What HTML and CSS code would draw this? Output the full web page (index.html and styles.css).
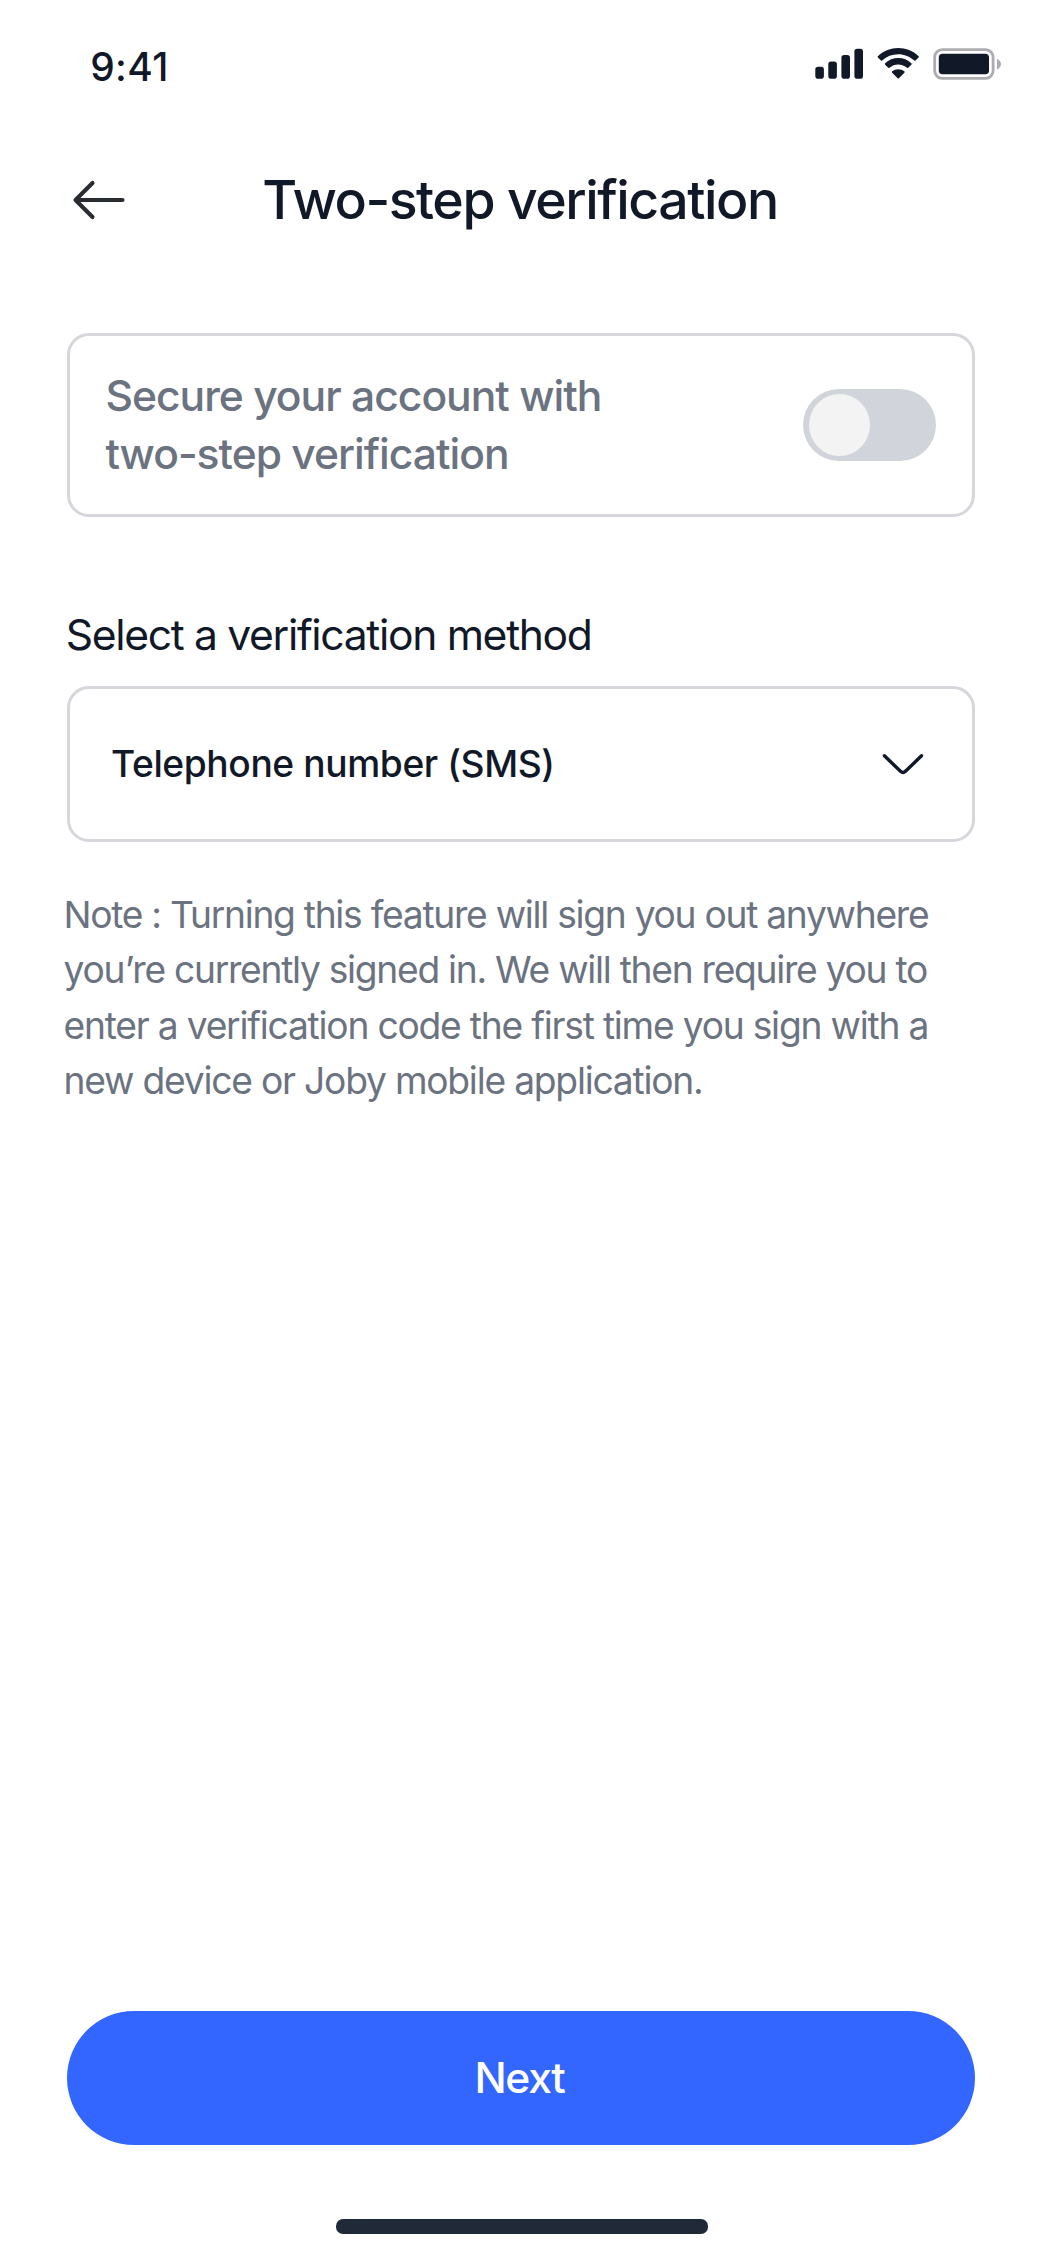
FILE: index.html
```
<!DOCTYPE html>
<html lang="en">
<head>
<meta charset="utf-8">
<title>Two-step verification</title>
<link rel="stylesheet" href="styles.css">
</head>
<body>
<div class="screen">
  <div class="status">
    <span class="time">9:41</span>
    <div class="indicators">
      <svg class="signal" width="48" height="32" viewBox="0 0 48 32" fill="#111827">
        <rect x="0.3" y="18.7" width="8.6" height="12" rx="2.8"/>
        <rect x="13.3" y="13.5" width="8.6" height="17.2" rx="2.8"/>
        <rect x="26.4" y="7" width="8.6" height="23.7" rx="2.8"/>
        <rect x="39.4" y="0.7" width="8.6" height="30" rx="2.8"/>
      </svg>
      <svg class="wifi" width="42.5" height="31" viewBox="0 0 17 12.4" fill="#111827">
        <path d="M8.5 2.46c2.4 0 4.7.93 6.43 2.58.13.13.34.13.46 0l1.25-1.27a.35.35 0 000-.5C12.1-1.09 4.9-1.09.34 3.27a.35.35 0 000 .5l1.25 1.27c.13.13.34.13.47 0A9.3 9.3 0 018.5 2.46z"/>
        <path d="M8.5 6.56c1.3 0 2.57.49 3.53 1.37.13.12.34.12.47-.01l1.25-1.27a.36.36 0 000-.51 7.63 7.63 0 00-10.5 0 .36.36 0 000 .51l1.25 1.27c.13.13.34.13.47.01a5.24 5.24 0 013.53-1.37z"/>
        <path d="M10.95 9.34a.35.35 0 01-.01.51l-2.2 2.2a.35.35 0 01-.48 0l-2.2-2.2a.35.35 0 01-.01-.51 3.82 3.82 0 014.9 0z"/>
      </svg>
      <svg class="battery" width="69" height="32" viewBox="0 0 69 32">
        <rect x="1.7" y="1.6" width="58.4" height="28.8" rx="7.6" fill="none" stroke="#adadb1" stroke-width="2.8"/>
        <rect x="5.8" y="5.7" width="50.2" height="20.6" rx="3.8" fill="#111827"/>
        <path d="M64 10.7v10.8c2.4-1 4-3 4-5.4s-1.6-4.4-4-5.4z" fill="#adadb1"/>
      </svg>
    </div>
  </div>

  <header class="header">
    <svg class="back" width="56" height="44" viewBox="0 0 56 44" fill="none" stroke="#292d32" stroke-width="4.1" stroke-linecap="round" stroke-linejoin="round">
      <path d="M21.500 5L4.500 22l17 17M51.500 22H5"/>
    </svg>
    <h1 class="title">Two-step verification</h1>
  </header>

  <main class="main">
    <section class="card">
      <p class="card-text">Secure your account with<br>two-step verification</p>
      <span class="toggle"><span class="knob"></span></span>
    </section>

    <p class="label">Select a verification method</p>
    <div class="select">
      <span class="select-value">Telephone number (SMS)</span>
      <svg class="chevron" width="44" height="26" viewBox="0 0 44 26" fill="none" stroke="#111827" stroke-width="3.4" stroke-linecap="round" stroke-linejoin="round">
        <path d="M3.4 4.8L19.5 20.3Q22 22.700 24.500 20.300L40.500 4.800"/>
      </svg>
    </div>

    <p class="note">Note : Turning this feature will sign you out anywhere<br>you’re currently signed in. We will then require you to<br><span class="note-end">enter a verification code the first time you sign with a<br>new device or Joby mobile application.</span></p>
  </main>

  <footer class="footer">
    <button class="next" type="button">Next</button>
    <div class="home-bar"></div>
  </footer>
</div>
</body>
</html>
```
FILE: styles.css
```
* { box-sizing: border-box; }

body {
  margin: 0;
  background: #fff;
  color: #111827;
  font-family: Inter, "Liberation Sans", sans-serif;
}

h1, p { margin: 0; }
svg { display: block; flex: none; }

.screen {
  display: flex;
  flex-direction: column;
  width: 1042px;
  height: 2256px;
}

.status {
  display: flex;
  justify-content: space-between;
  align-items: flex-start;
  height: 120px;
  padding: 42.6px 40px 0 90.2px;
}

.time {
  font-size: 38.9px;
  font-weight: 500;
  line-height: 48px;
  letter-spacing: 0.4px;
}

.indicators {
  display: flex;
  align-items: center;
  gap: 13.6px;
  padding-top: 5.4px;
}

.header {
  display: grid;
  grid-template-columns: 56px 1fr 56px;
  align-items: center;
  height: 160px;
  padding: 0 73px 0 71px;
}

.title {
  font-size: 53.6px;
  font-weight: 500;
  line-height: 68px;
  letter-spacing: -1.46px;
  text-align: center;
  white-space: nowrap;
}

.main {
  flex: 1;
  padding: 53px 67px 0;
}

.card, .select {
  display: flex;
  align-items: center;
  justify-content: space-between;
  border: 3px solid #d5d7dc;
  border-radius: 22px;
}

.card {
  height: 184px;
  padding: 0 36px 0 35.4px;
}

.card-text {
  color: #6b7280;
  font-size: 42.6px;
  font-weight: 500;
  line-height: 58.5px;
  letter-spacing: -1px;
}

.toggle {
  display: flex;
  align-items: center;
  width: 133px;
  height: 72px;
  padding-left: 5.5px;
  border-radius: 36px;
  background: #d1d5db;
}

.knob {
  width: 61px;
  height: 62px;
  border-radius: 50%;
  background: #f3f3f4;
}

.label {
  margin: 88.5px 0 22.5px -1.2px;
  font-size: 42.6px;
  line-height: 58px;
  letter-spacing: -1.33px;
}

.select {
  height: 155.5px;
  padding: 1px 47px 0 41px;
}

.select-value {
  font-size: 37.2px;
  font-weight: 500;
  line-height: 48px;
  letter-spacing: -0.41px;
}

.note {
  margin: 45px 0 0 -3.5px;
  color: #6b7280;
  font-size: 37.2px;
  line-height: 55.6px;
  letter-spacing: -1.28px;
}

.note-end { letter-spacing: -1.22px; }

.footer {
  display: flex;
  flex-direction: column;
  align-items: center;
  height: 245px;
  padding: 0 67px;
}

.next {
  width: 100%;
  height: 133.5px;
  padding: 0 3px 0 0;
  border: 0;
  border-radius: 67px;
  background: #3366ff;
  color: #fff;
  font: 500 42.6px/58px Inter, "Liberation Sans", sans-serif;
  letter-spacing: -1.3px;
}

.home-bar {
  width: 372px;
  height: 14.5px;
  margin: 74.5px 0 0 2px;
  border-radius: 7px;
  background: #1f2937;
}
```
